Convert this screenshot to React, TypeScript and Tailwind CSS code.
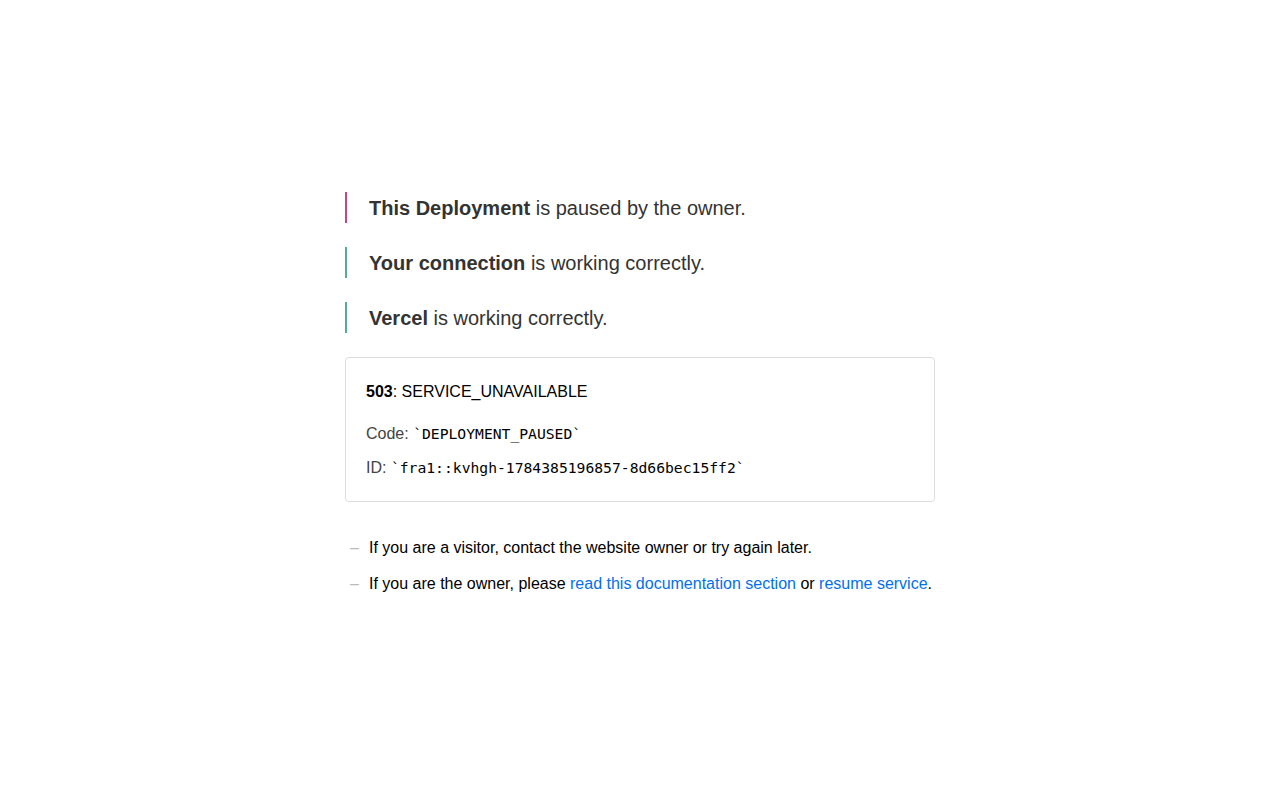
import React from 'react';

type Status = 'error' | 'ok';

interface StatusLine {
  status: Status;
  subject: string;
  rest: string;
}

const lines: StatusLine[] = [
  { status: 'error', subject: 'This Deployment', rest: 'is paused by the owner.' },
  { status: 'ok', subject: 'Your connection', rest: 'is working correctly.' },
  { status: 'ok', subject: 'Vercel', rest: 'is working correctly.' },
];

function StatusRow({ line }: { line: StatusLine }) {
  const bar = line.status === 'error' ? 'border-[#d0417f]' : 'border-[#50ae98]';
  return (
    <p className={`border-l-2 ${bar} pl-[22px] pt-px text-[20px] leading-[30px] text-[#333]`}>
      <strong className="font-bold">{line.subject}</strong> {line.rest}
    </p>
  );
}

function Mono({ children }: { children: React.ReactNode }) {
  return (
    <span className="font-['DejaVu_Sans_Mono',monospace] text-[14.7px] text-black">
      `{children}`
    </span>
  );
}

export default function App() {
  return (
    <div className="min-h-[800px] bg-white font-['Liberation_Sans',Arial,sans-serif]">
      <main className="mx-auto w-[590px] pt-[192px]">
        <div className="flex flex-col gap-[24px]">
          {lines.map((l, i) => (
            <StatusRow key={i} line={l} />
          ))}
        </div>

        <div className="mt-[24px] rounded-[4px] border border-[#ddd] px-[20px] pb-[21px] pt-[22px]">
          <p className="text-[16px] leading-6 text-black">
            <strong className="font-bold">503</strong>: SERVICE_UNAVAILABLE
          </p>
          <p className="mt-[18px] text-[16px] leading-6 text-[#444]">
            Code: <Mono>DEPLOYMENT_PAUSED</Mono>
          </p>
          <p className="mt-[10px] text-[16px] leading-6 text-[#444]">
            ID: <Mono>fra1::kvhgh-1784385196857-8d66bec15ff2</Mono>
          </p>
        </div>

        <ul className="mt-[34px] flex flex-col gap-[12px] text-[16px] leading-6 text-black">
          <li className="flex">
            <span className="w-[24px] pl-[5px] text-[#bbb]">–</span>
            <span>If you are a visitor, contact the website owner or try again later.</span>
          </li>
          <li className="flex">
            <span className="w-[24px] pl-[5px] text-[#bbb]">–</span>
            <span>
              If you are the owner, please{' '}
              <a href="#" className="text-[#0070f3]">read this documentation section</a> or{' '}
              <a href="#" className="text-[#0070f3]">resume service</a>.
            </span>
          </li>
        </ul>
      </main>
    </div>
  );
}
